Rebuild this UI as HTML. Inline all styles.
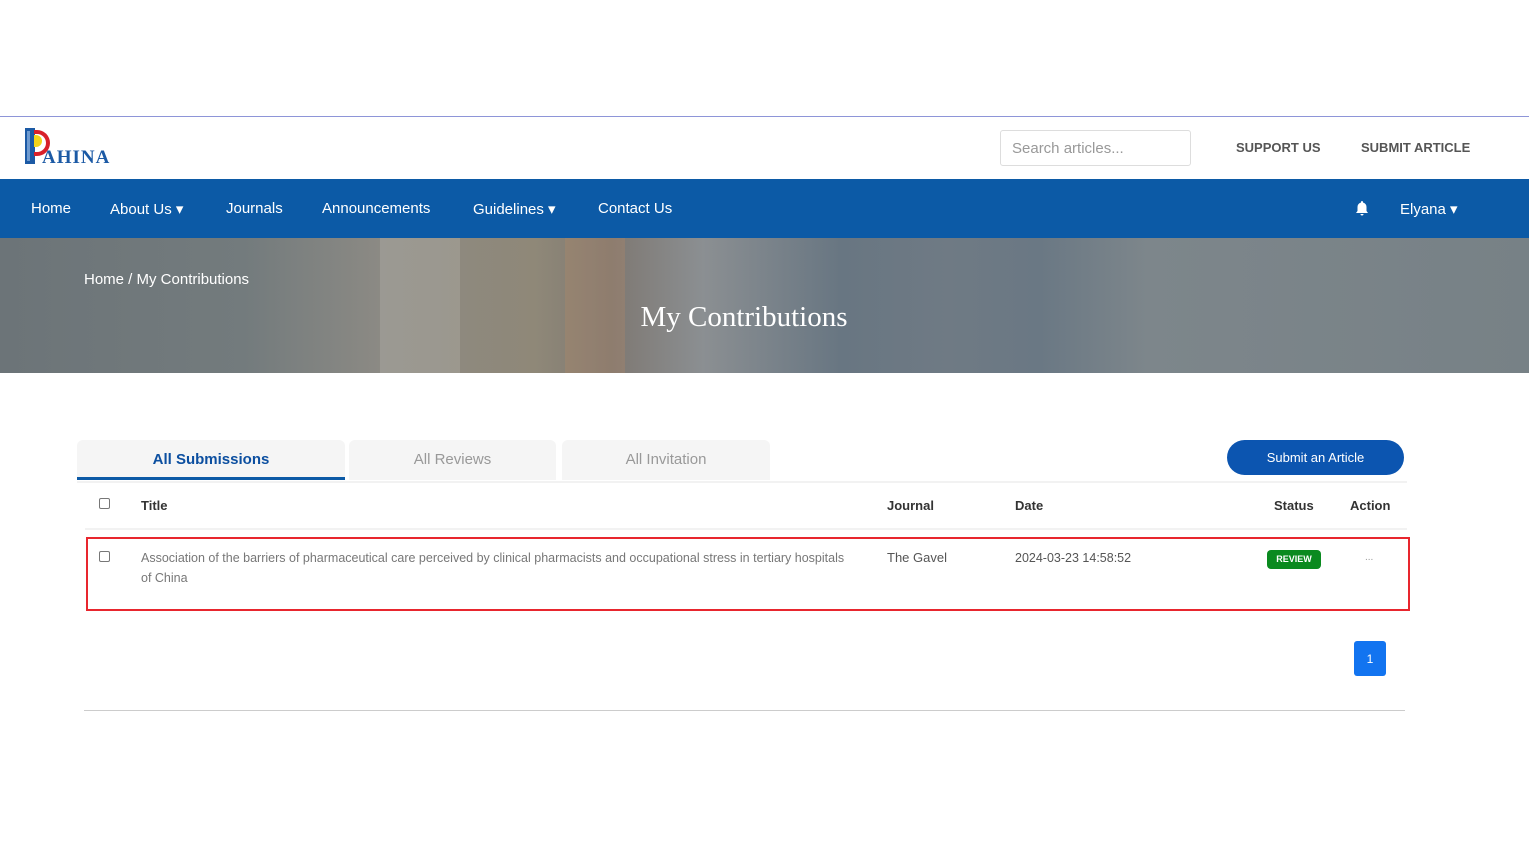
<!DOCTYPE html>
<html><head><style>
*{margin:0;padding:0;box-sizing:border-box}
body{width:1529px;height:844px;background:#fff;font-family:"Liberation Sans",sans-serif;position:relative;overflow:hidden;color:#333}
.a{position:absolute}
</style></head><body>
<div class="a" style="top:116px;left:0;width:1529px;height:1px;background:#8e95d8"></div>
<div class="a" style="left:25px;top:128px;width:10px;height:36px;background:#1c5aa5"></div>
<div class="a" style="left:27px;top:131px;width:3px;height:30px;background:#6f9bd0"></div>
<div class="a" style="left:34px;top:130px;width:16px;height:26px;border-radius:0 14px 14px 0;border:4px solid #d8202a;border-left:none"></div>
<div class="a" style="left:34px;top:135px;width:8px;height:12px;border-radius:0 8px 8px 0;background:#f2d31a"></div>
<div class="a" style="left:42px;top:147px;font-family:'Liberation Serif',serif;font-size:19px;color:#1c5aa5;letter-spacing:1px;font-weight:bold">AHINA</div>
<div class="a" style="left:1000px;top:130px;width:191px;height:36px;border:1px solid #ddd;border-radius:3px;font-size:15px;color:#999;padding:9px 11px">Search articles...</div>
<div class="a" style="left:1236px;top:140px;font-size:13px;font-weight:bold;color:#555">SUPPORT US</div>
<div class="a" style="left:1361px;top:140px;font-size:13px;font-weight:bold;color:#555">SUBMIT ARTICLE</div>
<div class="a" style="top:179px;left:0;width:1529px;height:59px;background:#0c5aa6;color:#fff;font-size:15px">
<span class="a" style="left:31px;top:21px">Home</span>
<span class="a" style="left:110px;top:21px">About Us &#9662;</span>
<span class="a" style="left:226px;top:21px">Journals</span>
<span class="a" style="left:322px;top:21px">Announcements</span>
<span class="a" style="left:473px;top:21px">Guidelines &#9662;</span>
<span class="a" style="left:598px;top:21px">Contact Us</span>
<svg class="a" style="left:1354px;top:21px" width="16" height="16" viewBox="0 0 16 16"><path d="M8 1a1 1 0 0 1 1 1v.5A4.5 4.5 0 0 1 12.5 7v4l1.5 2H2l1.5-2V7A4.5 4.5 0 0 1 7 2.5V2a1 1 0 0 1 1-1zM6.5 14h3a1.5 1.5 0 0 1-3 0z" fill="#fff"/></svg>
<span class="a" style="left:1400px;top:21px">Elyana &#9662;</span>
</div>
<div class="a" style="top:238px;left:0;width:1529px;height:135px;background:linear-gradient(90deg,#6c7478 0%,#737b7d 16%,#8c8a84 25%,#8f8878 35%,#7e7872 40%,#8b8f92 46%,#687682 55%,#6f7a84 62%,#6a7884 68%,#7d868b 75%,#778186 100%)"></div>
<div class="a" style="top:238px;left:380px;width:80px;height:135px;background:rgba(200,200,190,.25)"></div>
<div class="a" style="top:238px;left:565px;width:60px;height:135px;background:rgba(190,140,100,.25)"></div>
<div class="a" style="left:84px;top:271px;font-size:15px;color:#fff">Home / My Contributions</div>
<div class="a" style="left:0;width:1488px;top:301px;text-align:center;font-family:'Liberation Serif',serif;font-size:29px;color:#fff">My Contributions</div>
<div class="a" style="left:77px;top:440px;width:268px;height:40px;background:#f5f5f5;border-bottom:3px solid #0c5aa6;border-radius:6px 6px 0 0;text-align:center;padding-top:11px;font-size:15px;font-weight:bold;color:#0c4fa0">All Submissions</div>
<div class="a" style="left:349px;top:440px;width:207px;height:40px;background:#f5f5f5;border-radius:6px 6px 0 0;text-align:center;padding-top:11px;font-size:15px;color:#999">All Reviews</div>
<div class="a" style="left:562px;top:440px;width:208px;height:40px;background:#f5f5f5;border-radius:6px 6px 0 0;text-align:center;padding-top:11px;font-size:15px;color:#999">All Invitation</div>
<div class="a" style="left:1227px;top:440px;width:177px;height:35px;background:#0c55b0;border-radius:18px;color:#fff;text-align:center;padding-top:10px;font-size:13px">Submit an Article</div>
<div class="a" style="left:77px;top:481px;width:1330px;height:2px;background:#f2f2f2"></div>
<div class="a" style="left:99px;top:498px;width:11px;height:11px;border:1px solid #777;border-radius:2px"></div>
<div class="a" style="left:141px;top:498px;font-size:13px;font-weight:bold;color:#333">Title</div>
<div class="a" style="left:887px;top:498px;font-size:13px;font-weight:bold;color:#333">Journal</div>
<div class="a" style="left:1015px;top:498px;font-size:13px;font-weight:bold;color:#333">Date</div>
<div class="a" style="left:1274px;top:498px;font-size:13px;font-weight:bold;color:#333">Status</div>
<div class="a" style="left:1350px;top:498px;font-size:13px;font-weight:bold;color:#333">Action</div>
<div class="a" style="left:85px;top:528px;width:1322px;height:2px;background:#f2f2f2"></div>
<div class="a" style="left:99px;top:551px;width:11px;height:11px;border:1px solid #777;border-radius:2px"></div>
<div class="a" style="left:141px;top:548px;width:712px;font-size:12.5px;line-height:20px;color:#777">Association of the barriers of pharmaceutical care perceived by clinical pharmacists and occupational stress in tertiary hospitals of China</div>
<div class="a" style="left:887px;top:550px;font-size:13px;color:#555">The Gavel</div>
<div class="a" style="left:1015px;top:551px;font-size:12.5px;color:#555">2024-03-23 14:58:52</div>
<div class="a" style="left:1267px;top:550px;width:54px;height:19px;background:#0a8a1f;border-radius:4px;color:#fff;font-size:9px;font-weight:bold;text-align:center;padding-top:4px">REVIEW</div>
<div class="a" style="left:1365px;top:552px;font-size:10px;color:#999">...</div>
<div class="a" style="left:86px;top:537px;width:1324px;height:74px;border:2px solid #e8262e"></div>
<div class="a" style="left:1354px;top:641px;width:32px;height:35px;background:#1274f0;border-radius:3px;color:#fff;font-size:12px;text-align:center;padding-top:11px">1</div>
<div class="a" style="left:84px;top:710px;width:1321px;height:1px;background:#ccc"></div>
</body></html>
